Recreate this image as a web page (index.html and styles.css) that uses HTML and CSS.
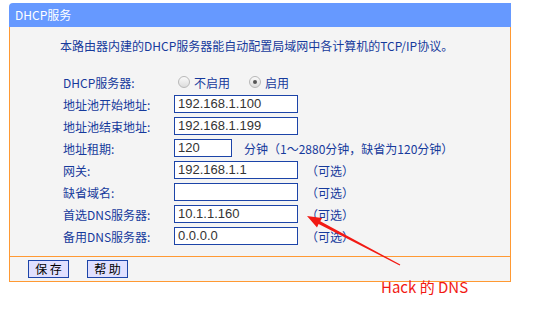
FILE: index.html
```html
<html>
<head>
<title>DHCP服务</title>
<link rel="stylesheet" href="styles.css">
</head>
<body>

<div class="panel">
    <div class="panel-title">DHCP服务</div>
    <div class="panel-body">
        <p class="intro">本路由器内建的DHCP服务器能自动配置局域网中各计算机的TCP/IP协议。</p>
        <div class="form">
            <div class="row">
                <span class="label">DHCP服务器:</span>
                <span class="radio"></span><span class="radio-text">不启用</span>
                <span class="radio checked"></span><span class="radio-text">启用</span>
            </div>
            <div class="row">
                <span class="label">地址池开始地址:</span>
                <span class="field">192.168.1.100</span>
            </div>
            <div class="row">
                <span class="label">地址池结束地址:</span>
                <span class="field">192.168.1.199</span>
            </div>
            <div class="row">
                <span class="label">地址租期:</span>
                <span class="field short">120</span>
                <span class="unit">分钟</span><span class="hint">（1～2880分钟，缺省为120分钟）</span>
            </div>
            <div class="row">
                <span class="label">网关:</span>
                <span class="field">192.168.1.1</span>
                <span class="opt">（可选）</span>
            </div>
            <div class="row">
                <span class="label">缺省域名:</span>
                <span class="field"></span>
                <span class="opt">（可选）</span>
            </div>
            <div class="row">
                <span class="label">首选DNS服务器:</span>
                <span class="field">10.1.1.160</span>
                <span class="opt">（可选）</span>
            </div>
            <div class="row">
                <span class="label">备用DNS服务器:</span>
                <span class="field">0.0.0.0</span>
                <span class="opt">（可选）</span>
            </div>
        </div>
    </div>
    <div class="panel-foot">
        <button>保 存</button>
        <button>帮 助</button>
    </div>
</div>

<svg class="arrow" width="548" height="309" viewBox="0 0 548 309">
    <polygon points="307,216 322,218 320.3,221.3 400.3,264.6 399.7,265.4 318.6,223.9 317,227.5" fill="#f21a14"/>
</svg>
<div class="note">Hack 的 DNS</div>

</body>
</html>
```

FILE: styles.css
```css
body { margin: 0; background: #fff; font-family: "Noto Sans CJK SC", sans-serif; font-size: 12px; color: #163a9c; position: relative; width: 548px; height: 309px; overflow: hidden; }
.panel { margin: 3px 0 0 9px; width: 502px; }
.panel-title { height: 24px; line-height: 24px; background: #6699ff; color: #fff; padding-left: 6px; border-top-left-radius: 4px; }
.panel-body { background: #f4f4f4; border-left: 1px solid #ff9933; border-right: 1px solid #ff9933; padding: 11px 0 9px 0; }
.intro { margin: 0 0 17px 50px; height: 16px; line-height: 16px; }
.form { padding-left: 53px; }
.row { display: flex; align-items: center; height: 22px; }
.label { width: 111px; }
.radio { width: 12px; height: 12px; border-radius: 50%; border: 1px solid #b8b8b8; background: linear-gradient(#fafafa, #dcdcdc); box-sizing: border-box; margin-left: 4px; position: relative; }
.radio.checked::after { content: ""; position: absolute; left: 3px; top: 3px; width: 4px; height: 4px; border-radius: 50%; background: #555; }
.radio-text { margin: 0 15px 0 4px; }
.field { width: 124px; height: 18px; box-sizing: border-box; border: 1px solid #1c44a8; background: #fff; font-family: "Liberation Sans", Arial, sans-serif; font-size: 13px; color: #333; line-height: 16px; padding-left: 3px; }
.field.short { width: 58px; }
.unit { margin-left: 12px; }
.opt { margin-left: 8px; }
.panel-foot { background: #f4f4f4; border: 1px solid #ff9933; height: 24px; display: flex; align-items: center; gap: 18px; padding-left: 18px; }
button { width: 41px; height: 18px; padding: 0; background: #e0e0ff; border: 1px solid #1c44a8; font-family: "Noto Sans CJK SC", sans-serif; font-size: 12px; color: #000; line-height: 14px; }
.arrow { position: absolute; left: 0; top: 0; }
.note { position: absolute; left: 381px; top: 277px; font-size: 15px; color: #f21a14; line-height: 20px; }
```
